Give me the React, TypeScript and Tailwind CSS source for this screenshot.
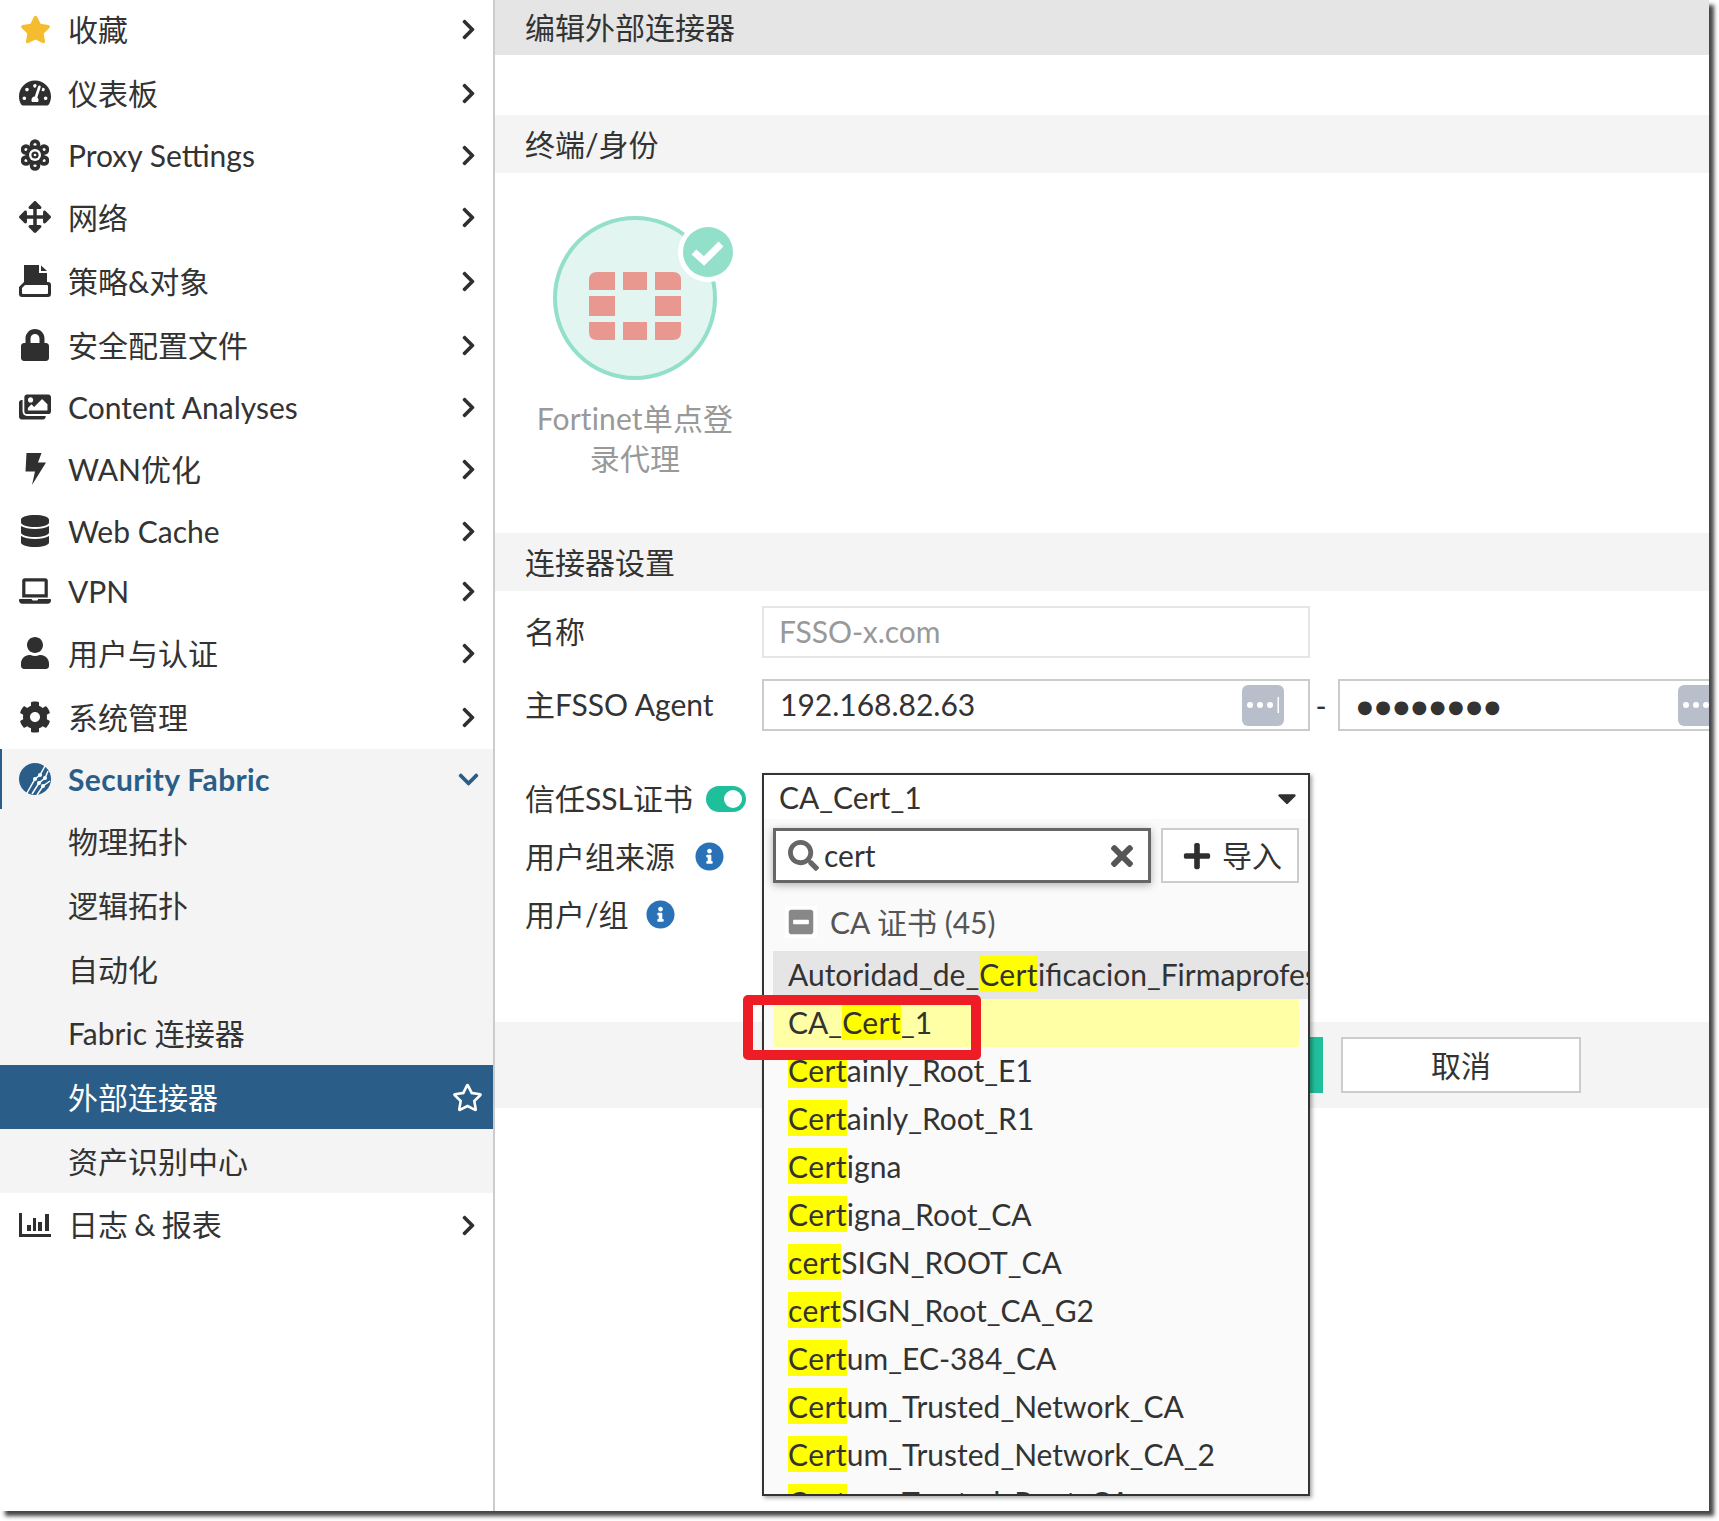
import React from "react";
import {
  FaStar, FaTachometerAlt, FaArrowsAlt, FaLock, FaImages, FaDatabase, FaLaptop, FaUser, FaCog,
  FaChevronRight, FaChevronDown, FaRegStar, FaInfoCircle, FaPlus, FaTimes, FaSearch, FaMinusSquare, FaCaretDown,
} from "react-icons/fa";

const ProxyIcon = () => (
  <svg width="28" height="32" viewBox="0 0 28 32" fill="#2f2f2f">
    {[[14, 5.5], [23, 10.5], [23, 21.5], [14, 26.5], [5, 21.5], [5, 10.5]].map(([x, y], i) => (
      <g key={i}>
        <circle cx={x} cy={y} r="5.3" />
        <circle cx={x} cy={y} r="1.6" fill="#fff" />
      </g>
    ))}
    <circle cx="14" cy="16" r="9.5" />
    <circle cx="14" cy="16" r="6" fill="#fff" />
    <circle cx="14" cy="16" r="3.6" />
    <circle cx="14" cy="16" r="1.3" fill="#fff" />
  </svg>
);

const PolicyIcon = () => (
  <svg width="32" height="32" viewBox="0 0 32 32" fill="#2f2f2f">
    <path fillRule="evenodd" d="M5 0H20V8H28V17H29a3 3 0 0 1 3 3V29a3 3 0 0 1-3 3H3a3 3 0 0 1-3-3V22L5 17ZM3 23V28a1 1 0 0 0 1 1H28a1 1 0 0 0 1-1V21a1 1 0 0 0-1-1H6Z" />
    <path d="M22 0.500 28 6H22Z" />
  </svg>
);

const BoltIcon = () => (
  <svg width="21" height="32" viewBox="0 0 21 32" fill="#2f2f2f">
    <path d="M1.500 0H16.500L13 9.500H21L7 32L10 18.500H0.500Z" />
  </svg>
);

const FabricIcon = () => (
  <svg width="32" height="32" viewBox="0 0 32 32">
    <circle cx="16" cy="16" r="16" fill="#2a5e88" />
    <g stroke="#fff" strokeWidth="1.500" fill="none">
      <path d="M8 30 L16 16 L21 12 L26 3" />
      <path d="M13 31 L20 20 L26 15 L29 8" />
      <path d="M18 32 L24 23 L31 18" />
    </g>
    <g fill="#fff">
      <circle cx="16" cy="16" r="2" />
      <circle cx="21" cy="12" r="2" />
      <circle cx="20" cy="20" r="2" />
      <circle cx="26" cy="15" r="2" />
      <circle cx="24" cy="23" r="2" />
    </g>
  </svg>
);

const LogIcon = () => (
  <svg width="32" height="24" viewBox="0 0 32 24" fill="#2f2f2f">
    <path d="M0 0H3V21H32V24H0Z" />
    <rect x="8" y="12" width="4" height="6" />
    <rect x="14" y="5" width="3" height="13" />
    <rect x="19" y="9" width="4" height="9" />
    <rect x="26" y="1" width="4" height="17" />
  </svg>
);

const d = "#2f2f2f";
const rows: { label: string; h: number; icon: React.ReactNode }[] = [
  { label: "收藏", h: 64, icon: <FaStar size={31} color="#f6bc2f" /> },
  { label: "仪表板", h: 64, icon: <FaTachometerAlt size={32} color={d} /> },
  { label: "Proxy Settings", h: 60, icon: <ProxyIcon /> },
  { label: "网络", h: 64, icon: <FaArrowsAlt size={32} color={d} /> },
  { label: "策略&对象", h: 64, icon: <PolicyIcon /> },
  { label: "安全配置文件", h: 64, icon: <FaLock size={32} color={d} /> },
  { label: "Content Analyses", h: 60, icon: <FaImages size={32} color={d} /> },
  { label: "WAN优化", h: 64, icon: <BoltIcon /> },
  { label: "Web Cache", h: 60, icon: <FaDatabase size={32} color={d} /> },
  { label: "VPN", h: 60, icon: <FaLaptop size={32} color={d} /> },
  { label: "用户与认证", h: 64, icon: <FaUser size={32} color={d} /> },
  { label: "系统管理", h: 64, icon: <FaCog size={32} color={d} /> },
];

const subRows = ["物理拓扑", "逻辑拓扑", "自动化", "Fabric 连接器", "外部连接器", "资产识别中心"];

const options: [string, string, string][] = [
  ["Autoridad_de_", "Cert", "ificacion_Firmaprofesional_CIF_A62634068"],
  ["CA_", "Cert", "_1"],
  ["", "Cert", "ainly_Root_E1"],
  ["", "Cert", "ainly_Root_R1"],
  ["", "Cert", "igna"],
  ["", "Cert", "igna_Root_CA"],
  ["", "cert", "SIGN_ROOT_CA"],
  ["", "cert", "SIGN_Root_CA_G2"],
  ["", "Cert", "um_EC-384_CA"],
  ["", "Cert", "um_Trusted_Network_CA"],
  ["", "Cert", "um_Trusted_Network_CA_2"],
  ["", "Cert", "um_Trusted_Root_CA"],
];

const MoreButton = () => (
  <div className="ml-auto w-[42px] h-[41px] rounded-md bg-[#b8bfca] flex items-center justify-center shrink-0">
    <svg width="34" height="20" viewBox="0 0 34 20" fill="#fff">
      <circle cx="4" cy="10" r="3" />
      <circle cx="14" cy="10" r="3" />
      <circle cx="24" cy="10" r="3" />
      <rect x="31.500" y="2" width="1.500" height="16" />
    </svg>
  </div>
);

function Section({ title }: { title: string }) {
  return <div className="h-[58px] bg-[#f4f4f4] pl-[30px] flex items-center">{title}</div>;
}

export default function App() {
  return (
    <div className="w-[1719px] h-[1521px] bg-white overflow-hidden">
      <div className="relative flex w-[1709px] h-[1511px] bg-white text-[30px] text-[#333] font-[family-name:Lato,'Noto_Sans_CJK_SC',sans-serif] shadow-[5px_5px_4px_0_rgba(50,50,50,0.9)]">
        <aside className="w-[495px] shrink-0 border-r-2 border-[#ccc] overflow-hidden">
          <div className="-mt-[3px]">
            {rows.map((r) => (
              <div key={r.label} style={{ height: r.h }} className="flex items-center pl-[19px] pr-[13px]">
                <span className="w-[32px] mr-[17px] flex justify-center shrink-0">{r.icon}</span>
                <span>{r.label}</span>
                <span className="ml-auto w-[23px] flex justify-center">
                  <FaChevronRight size={23} color={d} />
                </span>
              </div>
            ))}
            <div className="h-[60px] flex items-center pl-[17px] pr-[13px] bg-[#f4f4f4] border-l-2 border-[#2a5e88] font-bold text-[#2a5e88]">
              <span className="w-[32px] mr-[17px] flex justify-center shrink-0"><FabricIcon /></span>
              <span className="tracking-[0.35px]">Security Fabric</span>
              <span className="ml-auto w-[23px] flex justify-center">
                <FaChevronDown size={23} color="#2a5e88" />
              </span>
            </div>
            {subRows.map((s) =>
              s === "外部连接器" ? (
                <div key={s} className="h-[64px] flex items-center pl-[68px] pr-[10px] bg-[#2a5e88] text-white">
                  <span>{s}</span>
                  <span className="ml-auto"><FaRegStar size={31} color="#fff" /></span>
                </div>
              ) : (
                <div key={s} className="h-[64px] flex items-center pl-[68px] bg-[#f4f4f4]">{s}</div>
              )
            )}
            <div className="h-[64px] flex items-center pl-[19px] pr-[13px]">
              <span className="w-[32px] mr-[17px] flex justify-center shrink-0"><LogIcon /></span>
              <span className="[word-spacing:-1.500px] pb-[1px]">日志 &amp; 报表</span>
              <span className="ml-auto w-[23px] flex justify-center">
                <FaChevronRight size={23} color={d} />
              </span>
            </div>
          </div>
        </aside>

        <main className="relative flex-1 min-w-0 overflow-hidden">
          <div className="h-[55px] bg-[#e5e5e5] pl-[30px] flex items-center">编辑外部连接器</div>
          <div className="mt-[60px]"><Section title="终端/身份" /></div>

          <div className="h-[360px] pt-[43px] pl-[40px]">
            <svg width="203" height="164" viewBox="0 0 203 164" className="overflow-visible">
              <circle cx="100" cy="82" r="80" fill="#e2f5f0" stroke="#92dfca" strokeWidth="4" />
              <g fill="#e99890">
                <path d="M62 56H80V74H54V64Q54 56 62 56Z" />
                <rect x="88" y="56" width="24" height="18" />
                <path d="M120 56H138Q146 56 146 64V74H120Z" />
                <rect x="54" y="80" width="26" height="20" />
                <rect x="120" y="80" width="26" height="20" />
                <path d="M54 106H80V124H62Q54 124 54 116Z" />
                <rect x="88" y="106" width="24" height="18" />
                <path d="M120 106H146V116Q146 124 138 124H120Z" />
              </g>
              <circle cx="173" cy="36" r="30" fill="#fff" />
              <circle cx="173" cy="36" r="25" fill="#92dfca" />
              <path d="M159 36L169 45L186 28" fill="none" stroke="#fff" strokeWidth="7" />
            </svg>
            <div className="mt-[18px] w-[200px] text-center leading-[40px] text-[#999] tracking-[0.15px]">Fortinet单点登录代理</div>
          </div>

          <Section title="连接器设置" />

          <div className="mt-[15px] pl-[30px] flex items-center h-[52px]">
            <div className="w-[237px] shrink-0 pb-[2px]">名称</div>
            <div className="w-[548px] h-[52px] border-2 border-[#e6e6e6] pl-[15px] pb-[2px] flex items-center text-[#999]">FSSO-x.com</div>
          </div>

          <div className="mt-[21px] pl-[30px] flex items-center h-[52px]">
            <div className="w-[237px] shrink-0 pb-[2px]">主FSSO Agent</div>
            <div className="w-[548px] h-[52px] shrink-0 border-2 border-[#ccc] pl-[16px] pr-[24px] flex items-center">
              <span className="pb-[2px]">192.168.82.63</span>
              <MoreButton />
            </div>
            <div className="w-[28px] shrink-0 text-center pr-[6px]">-</div>
            <div className="w-[408px] h-[52px] shrink-0 border-2 border-[#ccc] pl-[17px] pr-[24px] flex items-center">
              <span className="font-['DejaVu_Sans',sans-serif] text-[18px] tracking-[2.500px] pt-[3px]">●●●●●●●●</span>
              <MoreButton />
            </div>
          </div>

          <div className="relative mt-[41px] pl-[30px] h-[250px]">
            <div className="h-[52px] flex items-center gap-[13px]">
              <span>信任SSL证书</span>
              <span className="w-[40px] h-[26px] mt-[2px] rounded-full bg-[#1fbf9b] flex items-center justify-end pr-[4px]">
                <span className="w-[18px] h-[18px] rounded-full bg-white" />
              </span>
            </div>
            <div className="mt-[6px] h-[52px] flex items-center gap-[20px]">
              <span>用户组来源</span>
              <FaInfoCircle size={29} color="#2a72b8" />
            </div>
            <div className="mt-[6px] h-[52px] flex items-center gap-[17px]">
              <span>用户/组</span>
              <FaInfoCircle size={29} color="#2a72b8" />
            </div>
          </div>

          <div className="h-[86px] bg-[#f4f4f4] pt-[15px] pl-[608px] flex gap-[18px]">
            <div className="w-[220px] h-[56px] bg-[#1fbf9b]" />
            <div className="w-[240px] h-[56px] border-2 border-[#ccc] bg-white flex items-center justify-center">取消</div>
          </div>

          {/* open dropdown, lies over the form */}
          <div className="absolute left-[267px] top-[773px] w-[548px] h-[723px] border-2 border-[#333] bg-white shadow-[2px_2px_4px_rgba(0,0,0,0.35)] overflow-hidden">
            <div className="h-[44px] pl-[15px] pr-[6px] flex items-center justify-between">
              <span>CA_Cert_1</span>
              <FaCaretDown size={30} color={d} className="mt-[1px]" />
            </div>
            <div className="h-[675px] bg-[#fafafa] overflow-hidden">
              <div className="pt-[9px] pl-[9px] flex gap-[10px]">
                <div className="w-[378px] h-[55px] border-[3px] border-[#666] bg-white shadow-[0_2px_8px_rgba(0,0,0,0.3)] pl-[12px] pr-[10px] flex items-center">
                  <FaSearch size={31} color="#666" />
                  <span className="ml-[5px]">cert</span>
                  <FaTimes size={32} color="#555" className="ml-auto" />
                </div>
                <div className="w-[138px] h-[55px] border-2 border-[#ccc] bg-white flex items-center pl-[19px] gap-[10px]">
                  <FaPlus size={30} color={d} />
                  <span>导入</span>
                </div>
              </div>
              <div className="h-[68px] pt-[10px] pl-[21px] flex items-center text-[#555]">
                <span className="w-[32px] h-[32px] bg-white flex items-center justify-center mr-[13px]">
                  <FaMinusSquare size={28} color="#888" />
                </span>
                <span>CA 证书 (45)</span>
              </div>
              {options.map(([a, b, c], i) => (
                <div
                  key={a + b + c}
                  className={
                    "h-[48px] ml-[9px] pl-[15px] pb-[2px] flex items-center whitespace-pre overflow-hidden " +
                    (i === 0 ? "bg-[#e5e5e5]" : i === 1 ? "bg-[#ffffa6] mr-[9px]" : "")
                  }
                >
                  <span>{a}<span className="bg-[#ffff00] tracking-[0.4px]">{b}</span>{c}</span>
                </div>
              ))}
            </div>
          </div>
        </main>

        {/* red annotation drawn on top of the screenshot */}
        <div className="absolute left-[743px] top-[995px] w-[238px] h-[65px] border-[10px] border-[#ee1c25] rounded-[5px]" />
      </div>
    </div>
  );
}
